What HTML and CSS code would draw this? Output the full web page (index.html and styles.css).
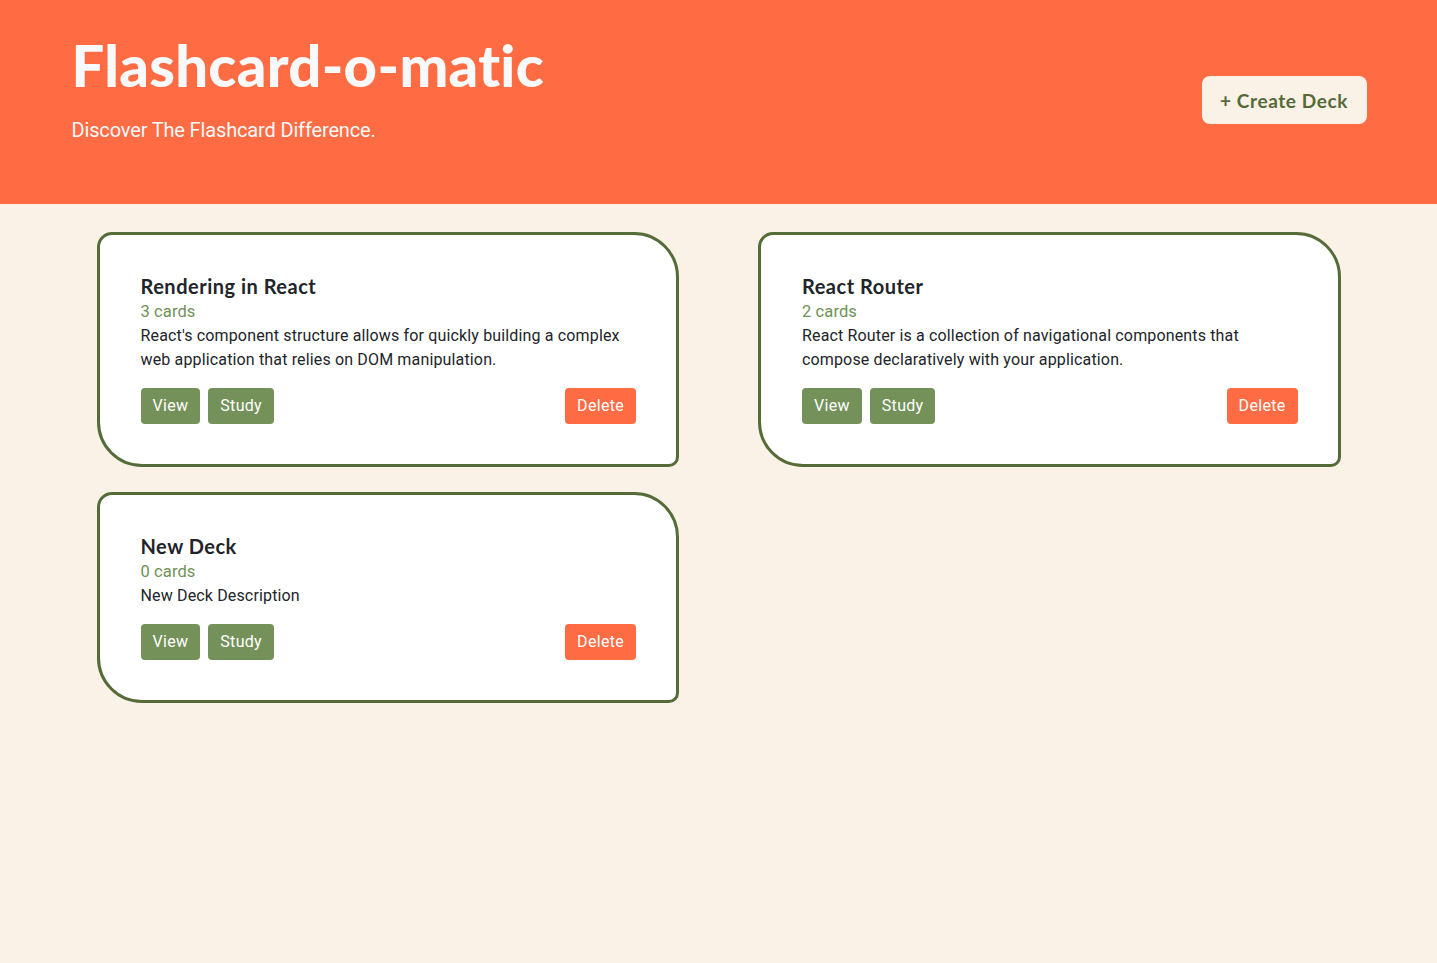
FILE: index.html
```html
<!DOCTYPE html>
<html lang="en">
<head>
<meta charset="utf-8">
<title>Flashcard-o-matic</title>
<link rel="stylesheet" href="styles.css">
</head>
<body>
<header class="hero">
  <div class="container hero-inner">
    <div class="hero-text">
      <h1 class="hero-title">Flashcard-o-matic</h1>
      <p class="hero-sub">Discover The Flashcard Difference.</p>
    </div>
    <button class="btn-create">+ Create Deck</button>
  </div>
</header>
<main class="container">
  <div class="deck-grid">
    <section class="deck">
      <h2 class="deck-title">Rendering in React</h2>
      <div class="deck-count">3 cards</div>
      <p class="deck-desc">React's component structure allows for quickly building a complex web application that relies on DOM manipulation.</p>
      <div class="deck-actions">
        <button class="btn btn-green">View</button>
        <button class="btn btn-green">Study</button>
        <button class="btn btn-red">Delete</button>
      </div>
    </section>
    <section class="deck">
      <h2 class="deck-title">React Router</h2>
      <div class="deck-count">2 cards</div>
      <p class="deck-desc">React Router is a collection of navigational components that compose declaratively with your application.</p>
      <div class="deck-actions">
        <button class="btn btn-green">View</button>
        <button class="btn btn-green">Study</button>
        <button class="btn btn-red">Delete</button>
      </div>
    </section>
    <section class="deck">
      <h2 class="deck-title">New Deck</h2>
      <div class="deck-count">0 cards</div>
      <p class="deck-desc">New Deck Description</p>
      <div class="deck-actions">
        <button class="btn btn-green">View</button>
        <button class="btn btn-green">Study</button>
        <button class="btn btn-red">Delete</button>
      </div>
    </section>
  </div>
</main>
</body>
</html>
```
FILE: styles.css
```css
* { box-sizing: border-box; }
html, body { margin: 0; padding: 0; }
body {
  background: #faf1e7;
  font-family: Roboto, "Liberation Sans", sans-serif;
  font-size: 16px;
  line-height: 24px;
  letter-spacing: 0.15px;
  color: #212529;
  min-height: 963px;
}
.container {
  max-width: 1320px;
  margin: 0 auto;
  padding: 0 12px;
}
.hero {
  background: #ff6b43;
  height: 204px;
  padding-top: 29px;
}
.hero-inner {
  display: flex;
  justify-content: space-between;
  align-items: flex-start;
}
.hero-title {
  margin: 0;
  font-family: Lato, sans-serif;
  font-weight: 900;
  font-size: 58px;
  line-height: 72px;
  color: #f8f9fa;
  letter-spacing: 0.3px;
  padding-left: 1px;
}
.hero-sub {
  margin: 14px 0 0;
  padding-left: 1px;
  font-family: Roboto, sans-serif;
  font-weight: 400;
  font-size: 20px;
  line-height: 30px;
  letter-spacing: -0.15px;
  color: #f8f9fa;
}
.btn-create {
  margin-top: 47px;
  height: 48px;
  width: 165px;
  border: none;
  border-radius: 8px;
  background: #faf1e7;
  color: #546b37;
  font-family: Lato, sans-serif;
  font-weight: 700;
  font-size: 19px;
  letter-spacing: 0.6px;
  padding: 0;
}
.deck-grid {
  display: grid;
  grid-template-columns: 1fr 1fr;
  column-gap: 79px;
  row-gap: 25px;
  padding: 28px 26px 0;
}
.deck {
  background: #fff;
  border: 3px solid #556b38;
  border-radius: 15px 45px 10px 45px;
  padding: 39px 40px 40px 41px;
}
.deck-title {
  margin: 0 0 1px;
  font-family: Lato, sans-serif;
  font-weight: 700;
  font-size: 20px;
  line-height: 24px;
  color: #212529;
  letter-spacing: 0.5px;
}
.deck-count {
  margin-top: 2px;
  font-size: 16.5px;
  letter-spacing: 0.1px;
  color: #6f9157;
}
.deck-desc {
  margin: 0;
}
.deck-actions {
  display: flex;
  gap: 8px;
  margin-top: 16px;
}
.btn {
  border: none;
  border-radius: 4px;
  padding: 6px 12px;
  font-family: Roboto, sans-serif;
  font-size: 16px;
  line-height: 24px;
  letter-spacing: 0.3px;
  color: #fff;
}
.btn-green { background: #74915a; }
.btn-red { background: #ff6b43; margin-left: auto; }
```
